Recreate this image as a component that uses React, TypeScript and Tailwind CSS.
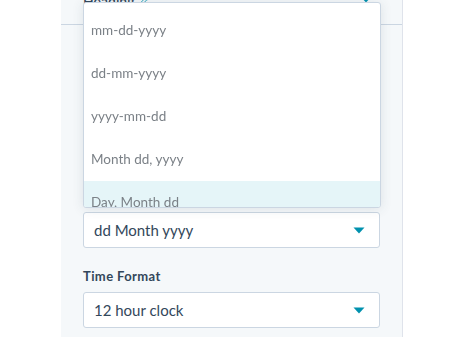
import { Pencil } from "lucide-react";

const FONT = "font-['Lato','Noto_Sans',sans-serif]";

const DATE_OPTIONS = [
  "mm-dd-yyyy",
  "dd-mm-yyyy",
  "yyyy-mm-dd",
  "Month dd, yyyy",
  "Day, Month dd",
];

function Caret() {
  return (
    <svg width="12" height="7" viewBox="0 0 12 7" className="shrink-0">
      <path d="M0.5 0.5 H11.5 L6 6.5 Z" fill="#0091ae" />
    </svg>
  );
}

function SelectBox({ value }: { value: string }) {
  return (
    <div className="flex h-[36px] items-center justify-between rounded-[3px] border border-[#cbd6e2] bg-white pl-[10px] pr-[14px]">
      <span className="text-[15px] text-[#33475b]">{value}</span>
      <Caret />
    </div>
  );
}

export default function App() {
  return (
    <div className={`h-[339px] w-full bg-white ${FONT}`}>
      <div className="relative ml-[61px] h-[337px] w-[342px] border-r border-[#dfe3eb] bg-[#f5f8fa]">
        {/* header peeking above the menu */}
        <div className="flex h-[25px] items-start justify-between border-b border-[#cbd6e2] px-[22px]">
          <div className="-mt-[10px] flex items-center gap-[4px]">
            <span className="text-[14px] font-semibold text-[#33475b]">Heading</span>
            <Pencil size={10} className="text-[#0091ae]" />
          </div>
          <div className="-mt-[4px] pr-[8px]">
            <Caret />
          </div>
        </div>

        <div className="px-[22px]">
          <div className="mb-[8px] mt-[163px] h-[16px] text-[13px] font-bold text-[#33475b]">Date Format</div>
          <SelectBox value="dd Month yyyy" />

          <div className="mb-[8px] mt-[20px] h-[16px] text-[13px] font-bold leading-[16px] tracking-[0.4px] text-[#33475b]">
            Time Format
          </div>
          <SelectBox value="12 hour clock" />
        </div>

        {/* open menu */}
        <div className="absolute left-[22px] top-[2px] h-[206px] w-[298px] overflow-hidden rounded-[3px] border border-[#cbd6e2] bg-white pt-[6px] shadow-[0_1px_12px_rgba(45,62,80,0.12)]">
          {DATE_OPTIONS.map((opt, i) => (
            <div
              key={opt}
              className={`flex h-[43px] items-center px-[7px] text-[13.5px] text-[#7b8187] blur-[0.3px] ${
                i === 4 ? "bg-[#e5f5f8]" : ""
              }`}
            >
              {opt}
            </div>
          ))}
        </div>
      </div>
    </div>
  );
}
